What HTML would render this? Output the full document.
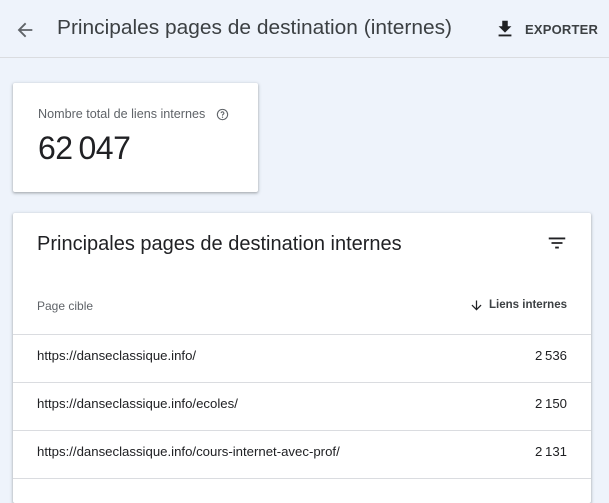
<!DOCTYPE html>
<html><head><meta charset="utf-8"><style>
*{margin:0;padding:0;box-sizing:border-box}
body{width:609px;height:488px;overflow:hidden;background:#eef3fb;font-family:"Liberation Sans",Roboto,sans-serif;color:#202124;position:relative}
.hdr{position:absolute;left:0;top:0;width:609px;height:58px;border-bottom:1px solid #dadce0}
.abs{position:absolute;white-space:nowrap}
.card{position:absolute;background:#fff;box-shadow:0 1px 2px rgba(60,64,67,.3),0 1px 3px 1px rgba(60,64,67,.15);border-radius:2px}
.line{position:absolute;left:0;right:0;height:1px;background:#dadce0}
.row{position:absolute;font-size:13.2px;color:#202124}
</style></head><body>
<div class="hdr">
<svg class="abs" style="left:14px;top:19px" width="22" height="22" viewBox="0 0 24 24"><path d="M20 11H7.83l5.59-5.59L12 4l-8 8 8 8 1.41-1.41L7.83 13H20z" fill="#5f6368"/></svg>
<div class="abs" style="left:57px;top:17px;font-size:20px;color:#3c4043;transform:scaleX(1.045);transform-origin:left">Principales pages de destination (internes)</div>
<svg class="abs" style="left:494px;top:18px" width="22" height="22" viewBox="0 0 24 24"><path d="M19 9h-4V3H9v6H5l7 7 7-7zM5 18v2h14v-2H5z" fill="#202124"/></svg>
<div class="abs" style="left:525px;top:22px;font-size:13px;font-weight:bold;color:#3c4043;letter-spacing:0.2px">EXPORTER</div>
</div>
<div class="card" style="left:13px;top:83px;width:245px;height:109px">
<div class="abs" style="left:25px;top:24px;font-size:12.6px;color:#5f6368">Nombre total de liens internes</div>
<svg class="abs" style="left:203px;top:25px" width="13" height="13" viewBox="0 0 24 24"><circle cx="12" cy="12" r="9.5" fill="none" stroke="#5f6368" stroke-width="2"/><path d="M9.5 9.5a2.5 2.5 0 1 1 3.5 2.3c-.7.4-1 .9-1 1.7v.5" fill="none" stroke="#5f6368" stroke-width="2"/><circle cx="12" cy="17" r="1.2" fill="#5f6368"/></svg>
<div class="abs" style="left:25px;top:47px;font-size:32px;color:#202124;letter-spacing:-0.5px">62&#8201;047</div>
</div>
<div class="card" style="left:13px;top:213px;width:578px;height:290px">
<div class="abs" style="left:24px;top:20px;font-size:20px;color:#202124">Principales pages de destination internes</div>
<svg class="abs" style="left:533px;top:19px" width="22" height="22" viewBox="0 0 24 24"><path d="M10 18h4v-2h-4v2zM3 6v2h18V6H3zm3 7h12v-2H6v2z" fill="#202124"/></svg>
<div class="abs" style="left:24px;top:86px;font-size:12px;color:#5f6368">Page cible</div>
<svg class="abs" style="left:456px;top:85px" width="15" height="15" viewBox="0 0 24 24"><path d="M20 12l-1.41-1.41L13 16.17V4h-2v12.17l-5.58-5.59L4 12l8 8 8-8z" fill="#202124"/></svg>
<div class="abs" style="right:24px;top:86px;font-size:11.5px;font-weight:bold;color:#3c4043">Liens internes</div>
<div class="line" style="top:121px"></div>
<div class="row" style="left:24px;top:135px">https://danseclassique.info/</div>
<div class="row" style="right:24px;top:135px">2&#8201;536</div>
<div class="line" style="top:169px"></div>
<div class="row" style="left:24px;top:183px">https://danseclassique.info/ecoles/</div>
<div class="row" style="right:24px;top:183px">2&#8201;150</div>
<div class="line" style="top:217px"></div>
<div class="row" style="left:24px;top:231px">https://danseclassique.info/cours-internet-avec-prof/</div>
<div class="row" style="right:24px;top:231px">2&#8201;131</div>
<div class="line" style="top:265px"></div>
</div>
</body></html>
